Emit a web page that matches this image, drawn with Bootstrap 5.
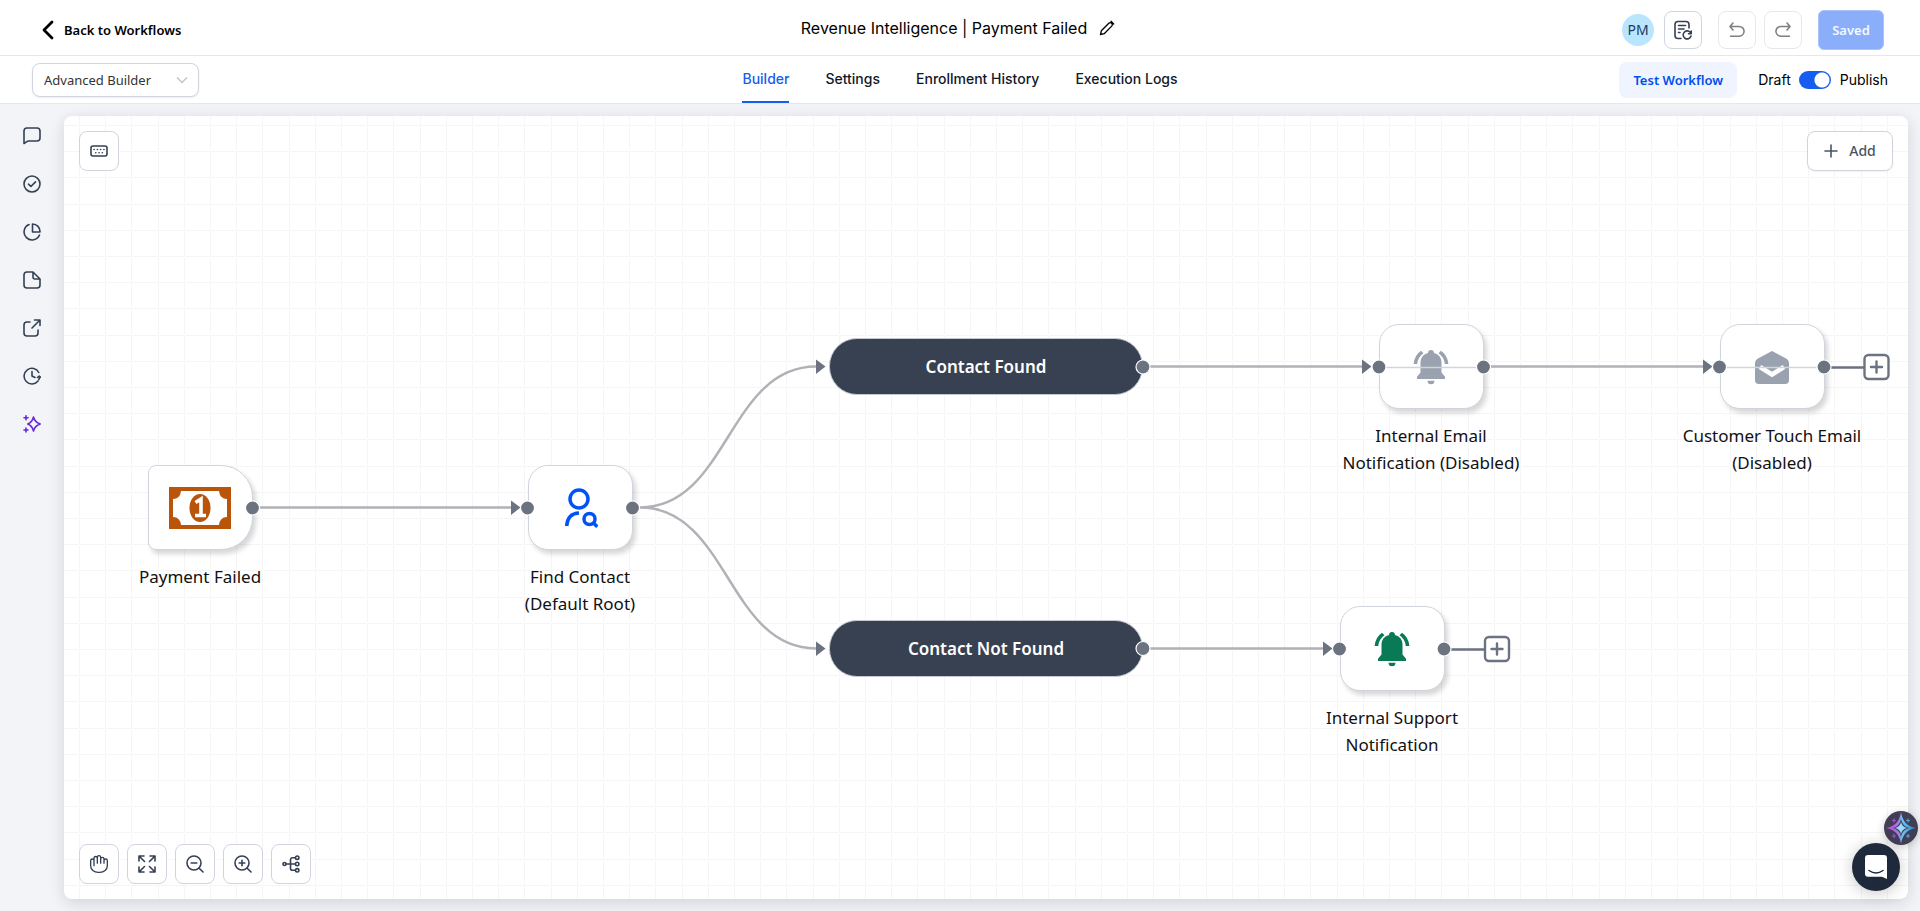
<!DOCTYPE html>
<html lang="en">
<head>
<meta charset="utf-8">
<meta name="viewport" content="width=device-width, initial-scale=1">
<title>Revenue Intelligence | Payment Failed</title>
<link href="https://cdn.jsdelivr.net/npm/bootstrap@5.3.0/dist/css/bootstrap.min.css" rel="stylesheet">
<style>
  :root { --ink: #344054; --line: #d0d5dd; --rule: #e4e7ec; --slate: #6b7280; --blue: #155eef; }
  body { font-family: "Noto Sans", "Open Sans", sans-serif; font-size: 14px; line-height: 20px; color: #101828; background: #f2f4f7; }
  svg { display: block; flex: none; }
  .stroke-icon { fill: none; stroke: currentColor; stroke-width: 1.6; stroke-linecap: round; stroke-linejoin: round; }
  .ui-font { font-family: Inter, sans-serif; }

  .top-row { height: 56px; border-bottom: 1px solid var(--rule); padding: 4px 36px 0 32px; }
  .tab-row { height: 48px; border-bottom: 1px solid var(--rule); padding: 0 32px; }
  .side-col { flex: 1 1 0; }
  .back-link { font-size: 13px; font-weight: 600; color: #000; gap: 8px; margin-left: 8px; }
  .flow-title { font-size: 16px; line-height: 24px; font-weight: 400; color: #000; margin: 0; }

  .avatar { width: 32px; height: 32px; background: #b9e6fe; color: #1d3a5c; font-size: 14px; margin-right: 10px; }
  .square-btn { width: 38px; height: 38px; padding: 0; border: 1px solid var(--line); border-radius: 8px; background: #fff; color: var(--ink); display: flex; align-items: center; justify-content: center; }
  .square-btn.faded { border-color: var(--rule); color: #808080; }
  .square-btn.tool { width: 40px; height: 40px; }
  .saved-btn { width: 66px; height: 40px; padding: 0; background: #8aaef9; border: 1px solid #a9c4fb; border-radius: 6px; color: #f5f8ff; font-size: 13px; font-weight: 600; }

  .mode-select { width: 167px; height: 34px; border: 1px solid var(--line); border-radius: 8px; box-shadow: 0 1px 2px rgba(16,24,40,.08); color: #333; font-size: 13px; padding: 0 11px; background: #fff; appearance: none; }
  .select-wrap svg { position: absolute; right: 11px; top: 12px; pointer-events: none; }
  .flow-tabs { gap: 36px; height: 47px; }
  .flow-tabs a { color: #101828; text-decoration: none; height: 47px; padding-top: 13px; border-bottom: 2px solid transparent; font-size: 14px; font-weight: 500; }
  .flow-tabs a.active { color: var(--blue); border-color: var(--blue); }
  .test-btn { width: 118px; height: 36px; padding: 0; border: 0; border-radius: 8px; background: #eff4ff; color: #004eeb; font-size: 13px; font-weight: 600; margin-right: 21px; }
  .publish-switch { width: 32px; height: 18px; margin: 0 9px 0 8px; appearance: none; border-radius: 9px; background: radial-gradient(circle at 23px 9px, #fff 7px, transparent 8px), var(--blue); }

  .rail { width: 64px; padding-top: 23px; gap: 30px; color: var(--ink); }
  .rail button { border: 0; background: none; padding: 0; color: inherit; }
  .rail button.ai { color: #6927da; }
  .board { background: #fff; border-radius: 8px; margin: 12px 12px 12px 0; box-shadow: 0 4px 16px rgba(16,24,40,.14); position: relative; overflow: hidden; }
  .layer { position: absolute; left: 0; top: 0; }
  .corner { position: absolute; display: flex; gap: 8px; }
  .corner.tl { left: 15px; top: 15px; }
  .corner.tr { right: 15px; top: 15px; }
  .corner.bl { left: 15px; bottom: 15px; }
  .add-btn { width: 86px; height: 40px; padding: 0; gap: 11px; border: 1px solid var(--line); border-radius: 8px; background: #fff; color: #475467; font-size: 14px; font-weight: 500; box-shadow: 0 1px 2px rgba(16,24,40,.05); }

  .step { position: absolute; width: 200px; display: flex; flex-direction: column; align-items: center; gap: 13px; text-align: center; font-size: 17px; line-height: 27px; color: #111; }
  .step-box { width: 105px; height: 85px; border: 1px solid var(--line); border-radius: 20px; background: #fff; box-shadow: 3px 4px 5px rgba(0,0,0,.16); display: flex; align-items: center; justify-content: center; }
  .step-box.trigger { border-radius: 8px 32px 32px 8px; }
  .branch { position: absolute; left: 765px; width: 314px; height: 57px; border: 1px solid #c3c8d1; border-radius: 28px; background: #384152; color: #fff; font-size: 17px; font-weight: 600; display: flex; align-items: center; justify-content: center; }
  #s-payment { left: 36px; top: 349px; }
  #s-find { left: 416px; top: 349px; }
  #s-email { left: 1267px; top: 208px; }
  #s-touch { left: 1608px; top: 208px; }
  #s-support { left: 1228px; top: 490px; }
  #b-found { top: 222px; }
  #b-missing { top: 504px; }

  .helper { position: fixed; right: 2px; bottom: 66px; border: 0; padding: 0; background: none; border-radius: 50%; box-shadow: 0 2px 8px rgba(0,0,0,.2); }
  .chat { position: fixed; right: 20px; bottom: 20px; width: 48px; height: 48px; border: 0; padding: 0; border-radius: 50%; background: #1e293b; box-shadow: 0 2px 16px rgba(0,0,0,.22); display: flex; align-items: center; justify-content: center; }
</style>
</head>
<body class="vh-100 d-flex flex-column overflow-hidden">

<header class="bg-white">
  <div class="top-row d-flex align-items-center">
    <div class="side-col d-flex">
      <a href="#" class="back-link d-flex align-items-center text-decoration-none">
        <svg width="16" height="20" viewBox="0 0 16 20" fill="none" stroke="#000" stroke-width="2.800" stroke-linecap="round" stroke-linejoin="round"><path d="M12 2 4 10l8 8"/></svg>
        Back to Workflows
      </a>
    </div>
    <div class="d-flex align-items-center gap-2 pb-1">
      <h1 class="flow-title ui-font">Revenue Intelligence | Payment Failed</h1>
      <button class="border-0 bg-transparent p-0 text-black" aria-label="Rename">
        <svg class="ms-1" width="16" height="16" viewBox="0 0 16 16" fill="none" stroke="currentColor" stroke-width="1.300" stroke-linecap="round" stroke-linejoin="round"><path d="M1.500 14.500 2.300 10.800 9.800 3.200a2 2 0 0 1 2.900 2.900L5.200 13.700ZM12 1.300l2.700 2.700"/></svg>
      </button>
    </div>
    <div class="side-col d-flex align-items-center justify-content-end">
      <span class="avatar rounded-circle d-flex align-items-center justify-content-center">PM</span>
      <button class="square-btn me-3" aria-label="Notes history">
        <svg width="20" height="20" viewBox="0 0 20 20" class="stroke-icon"><path d="M8 18.500H5A3 3 0 0 1 2 15.500v-11A3 3 0 0 1 5 1.500h8a3 3 0 0 1 3 3V8M5.500 5.500h7M5.500 9H11M5.500 12.500H7"/><path d="M18.200 11v2.700h-2.700M17.900 13.500a4 4 0 1 0 .1 2.500"/></svg>
      </button>
      <button class="square-btn faded me-2" aria-label="Undo">
        <svg width="18" height="18" viewBox="0 0 18 18" class="stroke-icon"><path d="M5 2 2 5.500 5 9M2.500 5.500h8.700a4.800 4.800 0 0 1 0 9.700H2.500"/></svg>
      </button>
      <button class="square-btn faded me-3" aria-label="Redo">
        <svg width="18" height="18" viewBox="0 0 18 18" class="stroke-icon"><path d="m13 2 3 3.500L13 9M15.500 5.500H6.800a4.800 4.800 0 0 0 0 9.700h8.700"/></svg>
      </button>
      <button class="saved-btn">Saved</button>
    </div>
  </div>

  <div class="tab-row d-flex align-items-center">
    <div class="side-col">
      <div class="select-wrap position-relative d-inline-block align-middle">
        <select class="mode-select" aria-label="Builder mode"><option>Advanced Builder</option></select>
        <svg width="12" height="10" viewBox="0 0 12 10" fill="none" stroke="#c2c2c2" stroke-width="1.300"><path d="M1 2.500 6 7.500 11 2.500"/></svg>
      </div>
    </div>
    <nav class="flow-tabs ui-font d-flex" aria-label="Workflow">
      <a href="#" class="active">Builder</a>
      <a href="#">Settings</a>
      <a href="#">Enrollment History</a>
      <a href="#">Execution Logs</a>
    </nav>
    <div class="side-col d-flex align-items-center justify-content-end text-black">
      <button class="test-btn">Test Workflow</button>
      <label for="publish" class="ui-font">Draft</label>
      <input id="publish" type="checkbox" role="switch" class="publish-switch" checked>
      <label for="publish" class="ui-font">Publish</label>
    </div>
  </div>
</header>

<main class="d-flex flex-grow-1">
  <aside class="rail d-flex flex-column align-items-center flex-shrink-0">
    <button aria-label="Comments"><svg width="18" height="18" viewBox="0 0 18 18" class="stroke-icon"><path d="M1 16.500V4a3 3 0 0 1 3-3h10a3 3 0 0 1 3 3v7a3 3 0 0 1-3 3H5.500q-1 0-2 .8Z"/></svg></button>
    <button aria-label="Checks"><svg width="18" height="18" viewBox="0 0 18 18" class="stroke-icon"><circle cx="9" cy="9" r="8"/><path d="m5.500 9.200 2.400 2.300 4.600-4.600"/></svg></button>
    <button aria-label="Statistics"><svg width="18" height="18" viewBox="0 0 18 18" class="stroke-icon"><path d="M6 1.600A8 8 0 1 0 16.500 12M9.500 1a7.500 7.500 0 0 1 7.500 8H9.500Z"/></svg></button>
    <button aria-label="Notes"><svg width="18" height="18" viewBox="0 0 18 18" class="stroke-icon"><path d="M10 1H4a3 3 0 0 0-3 3v10a3 3 0 0 0 3 3h10a3 3 0 0 0 3-3V8ZM10 1v5a2 2 0 0 0 2 2h5"/></svg></button>
    <button aria-label="Open"><svg width="18" height="18" viewBox="0 0 18 18" class="stroke-icon"><path d="M7 3H4a3 3 0 0 0-3 3v8a3 3 0 0 0 3 3h8a3 3 0 0 0 3-3v-3M11.500 1H17v5.500M16.500 1.500 9 9"/></svg></button>
    <button aria-label="History"><svg width="18" height="18" viewBox="0 0 18 18" class="stroke-icon"><path d="M15.800 5.500A7.800 7.800 0 1 0 15 14M9 4.500V9l3 1.500M14.500 10.500l1.700-1.500 1.800 1.500M16.500 9.500q0 2-.6 3"/></svg></button>
    <button class="ai" aria-label="AI"><svg width="18" height="18" viewBox="0 0 18 18" class="stroke-icon"><path d="M10.500 2q1.300 5.200 6.700 7-5.400 1.800-6.700 7-1.300-5.200-5.700-7 4.400-1.800 5.700-7ZM3 .8v4M1 2.800h4M3 13v4M1 15h4"/></svg></button>
  </aside>

  <section class="board flex-grow-1" aria-label="Workflow canvas">
    <svg class="layer" width="100%" height="100%" aria-hidden="true">
      <defs>
        <pattern id="grid" x="15" y="9" width="131" height="131" patternUnits="userSpaceOnUse">
          <path fill="#f5f5f6" d="M0 0h1v131H0zM26 0h1v131h-1zM52 0h1v131h-1zM79 0h1v131h-1zM105 0h1v131h-1zM0 0v1h131V0zM0 26v1h131v-1zM0 52v1h131v-1zM0 79v1h131v-1zM0 105v1h131v-1z"/>
        </pattern>
      </defs>
      <rect width="100%" height="100%" fill="url(#grid)"/>
    </svg>

    <article class="step" id="s-payment">
      <div class="step-box trigger">
        <svg width="62" height="42" viewBox="0 0 62 42"><path fill="#b95409" fill-rule="evenodd" d="M0 0h62v42H0ZM12 4Q11 12 4 12v18q7 0 8 8h38q1-8 8-8V12q-7 0-8-8Z"/><ellipse cx="31" cy="21" rx="10.500" ry="14" fill="#b95409"/><path d="M26.500 15.500 32 12v16M26 28.500h11" fill="none" stroke="#fff" stroke-width="3.600"/></svg>
      </div>
      <span>Payment Failed</span>
    </article>
    <article class="step" id="s-find">
      <div class="step-box">
        <svg width="36" height="40" viewBox="0 0 36 40" fill="none" stroke="#0052f5" stroke-width="3.500"><circle cx="17" cy="11" r="9"/><path d="M4.700 38Q5.500 25.500 17 25"/><circle cx="27.500" cy="31" r="5.500"/><path d="m31.500 35 3.800 3.800"/></svg>
      </div>
      <span>Find Contact<br>(Default Root)</span>
    </article>
    <div class="branch" id="b-found">Contact Found</div>
    <div class="branch" id="b-missing">Contact Not Found</div>
    <article class="step" id="s-email">
      <div class="step-box">
        <svg width="36" height="36" viewBox="0 0 36 36" fill="#9aa1af"><path id="bell" d="M18 1a3 3 0 0 1 3 2.900A10 10 0 0 1 28.500 13v10.500l3.500 4.200V30H4v-2.300l3.500-4.200V13A10 10 0 0 1 15 3.900 3 3 0 0 1 18 1ZM14.500 31.700h7a3.500 3.500 0 0 1-7 0ZM8 1.700l2.500 2.600Q5 8 4.200 15H.6Q1.500 6 8 1.700ZM28 1.700l-2.500 2.600Q31 8 31.800 15h3.600Q34.500 6 28 1.700Z"/></svg>
      </div>
      <span>Internal Email Notification (Disabled)</span>
    </article>
    <article class="step" id="s-touch">
      <div class="step-box">
        <svg width="34" height="34" viewBox="0 0 34 34"><path fill="#9aa1af" d="M17 1 31 8.500q3 1.700 3 5V30a4 4 0 0 1-4 4H4a4 4 0 0 1-4-4V13.500q0-3.300 3-5Z"/><path d="m5 17 12 7.500L29 17" fill="none" stroke="#fff" stroke-width="4.500"/></svg>
      </div>
      <span>Customer Touch Email (Disabled)</span>
    </article>
    <article class="step" id="s-support">
      <div class="step-box">
        <svg width="36" height="36" viewBox="0 0 36 36" fill="#087a55"><use href="#bell"/></svg>
      </div>
      <span>Internal Support Notification</span>
    </article>

    <svg class="layer pe-none" width="1844" height="783" fill="none" aria-hidden="true">
      <g stroke="#b1b1b7" stroke-width="2.500">
        <path d="M196 391.500H448M576 391.500C664 391.500 664 250.500 752 250.500M576 391.500C664 391.500 664 532.500 752 532.500M1086 250.500H1298M1427 250.500H1639M1086 532.500H1259"/>
      </g>
      <path stroke="#d0d5dd" stroke-width="1.500" d="M1322 251.500h90M1663 251.500h90"/>
      <path stroke="#6b7280" stroke-width="2.500" d="M1765 251.500h36M1385 533.500h36"/>
      <g fill="#6b7280">
        <path id="arrow" d="M447 384.500l9.500 7-9.500 7.500z"/>
        <use href="#arrow" x="305" y="-141"/><use href="#arrow" x="305" y="141"/>
        <use href="#arrow" x="851" y="-141"/><use href="#arrow" x="1192" y="-141"/><use href="#arrow" x="812" y="141"/>
        <g stroke="#fff" stroke-width="1.200">
          <circle cx="188.500" cy="392" r="7"/><circle cx="463.500" cy="392" r="7"/><circle cx="568.500" cy="392" r="7"/>
          <circle cx="1079" cy="251" r="7"/><circle cx="1079" cy="532.500" r="7"/>
          <circle cx="1315" cy="251" r="7"/><circle cx="1419.500" cy="251" r="7"/>
          <circle cx="1655.500" cy="251" r="7"/><circle cx="1760" cy="251" r="7"/>
          <circle cx="1275.500" cy="533" r="7"/><circle cx="1380" cy="533" r="7"/>
        </g>
      </g>
      <g id="plus" stroke="#6b7280" stroke-width="2.400" stroke-linecap="round"><rect x="1421" y="521" width="24" height="24" rx="4" fill="#fff"/><path d="M1427.500 533h11M1433 527.500v11"/></g>
      <use href="#plus" x="379.500" y="-282"/>
    </svg>

    <div class="corner tl">
      <button class="square-btn tool" aria-label="Keyboard shortcuts"><svg width="18" height="12" viewBox="0 0 18 12" class="stroke-icon"><rect x="1" y="1" width="16" height="10" rx="2"/><path d="M4 4.500h.1M7.300 4.500h.1M10.600 4.500h.1M13.900 4.500h.1M5.700 7.800h.1M9 7.800h.1M12.300 7.800h.1"/></svg></button>
    </div>
    <div class="corner tr">
      <button class="add-btn d-flex align-items-center justify-content-center"><svg width="14" height="14" viewBox="0 0 14 14" class="stroke-icon"><path d="M7 1v12M1 7h12"/></svg>Add</button>
    </div>
    <div class="corner bl">
      <button class="square-btn tool" aria-label="Pan"><svg width="20" height="20" viewBox="0 0 24 24" class="stroke-icon"><path d="M18 11V6a2 2 0 0 0-4 0v5V4a2 2 0 0 0-4 0v7V5a2 2 0 0 0-4 0v9M6 13V8a2 2 0 0 0-4 0v6a9 8 0 0 0 9 8h2a9 8 0 0 0 9-8V8a2 2 0 0 0-4 0"/></svg></button>
      <button class="square-btn tool" aria-label="Fit to screen"><svg width="18" height="18" viewBox="0 0 18 18" class="stroke-icon"><path d="M1 6V1h5M1 1l5.500 5.500M12 1h5v5M17 1l-5.500 5.500M1 12v5h5M1 17l5.500-5.500M12 17h5v-5M17 17l-5.500-5.500"/></svg></button>
      <button class="square-btn tool" aria-label="Zoom out"><svg width="18" height="18" viewBox="0 0 18 18" class="stroke-icon"><circle cx="8" cy="8" r="7"/><path d="m13.200 13.200 3.800 3.800M5.200 8h5.600"/></svg></button>
      <button class="square-btn tool" aria-label="Zoom in"><svg width="18" height="18" viewBox="0 0 18 18" class="stroke-icon"><circle cx="8" cy="8" r="7"/><path d="m13.200 13.200 3.800 3.800M5.200 8h5.600M8 5.200v5.600"/></svg></button>
      <button class="square-btn tool" aria-label="Auto layout"><svg width="18" height="18" viewBox="0 0 18 18" class="stroke-icon"><circle cx="2.500" cy="9" r="1.500"/><circle cx="15.200" cy="2.700" r="1.700"/><circle cx="15.200" cy="9" r="1.700"/><circle cx="15.200" cy="15.300" r="1.700"/><path d="M4.500 9h8.500M13 2.700h-2.500a2 2 0 0 0-2 2v8.600a2 2 0 0 0 2 2H13"/></svg></button>
    </div>
  </section>
</main>

<button class="helper" aria-label="Assistant">
  <svg width="34" height="34" viewBox="0 0 34 34">
    <defs><linearGradient id="spark"><stop offset="0" stop-color="#c248d6"/><stop offset=".4" stop-color="#a974ea"/><stop offset=".55" stop-color="#6fc4f0"/><stop offset="1" stop-color="#2379c4"/></linearGradient></defs>
    <circle cx="17" cy="17" r="17" fill="#403f54"/>
    <path d="M17 1q2 14 15 16-13 2-15 16Q15 19 2 17 15 15 17 1Z" fill="url(#spark)"/>
    <path d="M17 8q1.500 7.500 8 9-6.500 1.500-8 9-1.500-7.500-8-9 6.500-1.500 8-9Z" fill="#403f54"/>
    <path d="M17 11q1 5 6 6-5 1-6 6-1-5-6-6 5-1 6-6Z" fill="#9bdcff"/>
    <path d="M10 7.500v4M8 9.500h4M10 23v4M8 25h4" stroke="#a14fd0" stroke-width="1.200"/><path d="M24 7.500v4M22 9.500h4M24 23v4M22 25h4" stroke="#4f9fe0" stroke-width="1.200"/>
  </svg>
</button>
<button class="chat" aria-label="Open chat">
  <svg width="22" height="24" viewBox="0 0 22 24"><path fill="#fff" d="M3 0h16a3 3 0 0 1 3 3v21l-5-2.300H3a3 3 0 0 1-3-3V3a3 3 0 0 1 3-3Z"/><path d="M4 15.500q7 5 14 0" fill="none" stroke="#1e293b" stroke-width="1.500" stroke-linecap="round"/></svg>
</button>

<script src="https://cdn.jsdelivr.net/npm/bootstrap@5.3.0/dist/js/bootstrap.bundle.min.js"></script>
</body>
</html>
